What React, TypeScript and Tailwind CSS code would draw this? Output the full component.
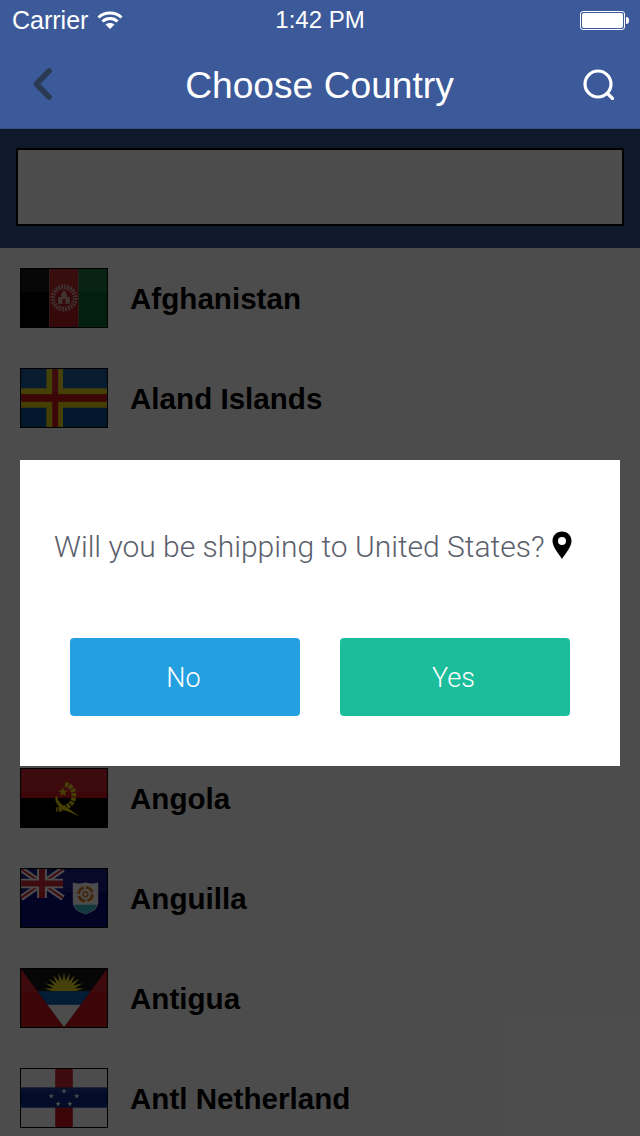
import type { ReactNode } from 'react';

function Star({ x, y, r, fill }: { x: number; y: number; r: number; fill: string }) {
  const pts = [];
  for (let i = 0; i < 10; i++) {
    const a = (Math.PI / 5) * i - Math.PI / 2;
    const d = i % 2 === 0 ? r : r * 0.42;
    pts.push(`${x + d * Math.cos(a)},${y + d * Math.sin(a)}`);
  }
  return <polygon points={pts.join(' ')} fill={fill} />;
}

function Sun() {
  const pts = [];
  const rays = 11;
  for (let i = 0; i <= rays * 2; i++) {
    const a = Math.PI + (Math.PI / (rays * 2)) * i;
    const d = i % 2 === 1 ? 20 : 11;
    pts.push(`${44 + d * 1.05 * Math.cos(a)},${23 + d * Math.sin(a)}`);
  }
  return <polygon points={pts.join(' ')} fill="#e8d20f" />;
}

function Afghanistan() {
  return (
    <>
      <rect width="29" height="60" fill="#000" />
      <rect x="29" width="30" height="60" fill="#b11b1f" />
      <rect x="59" width="29" height="60" fill="#0b6a2e" />
      <circle cx="44" cy="30" r="11.5" fill="none" stroke="#e6dcdc" strokeWidth="5" strokeDasharray="2 1" opacity="0.65" />
      <path d="M38 36 L38 29 L41 29 L41 26 L44 22 L47 26 L47 29 L50 29 L50 36 Z" fill="#efe8e8" opacity="0.7" />
      <rect x="42.5" y="31" width="3" height="5" fill="#b11b1f" />
    </>
  );
}

function Aland() {
  return (
    <>
      <rect width="88" height="60" fill="#0a4d96" />
      <rect x="26" width="17" height="60" fill="#e8d20f" />
      <rect y="20" width="88" height="20" fill="#e8d20f" />
      <rect x="32" width="6" height="60" fill="#c8141e" />
      <rect y="26" width="88" height="8" fill="#c8141e" />
    </>
  );
}

function Angola() {
  return (
    <>
      <rect width="88" height="30" fill="#c8141e" />
      <rect y="30" width="88" height="30" fill="#000" />
      <path d="M45 16 Q 55 18 54 29 Q 53 40 36 42" fill="none" stroke="#e8d20f" strokeWidth="5" strokeDasharray="3.5 1" />
      <path d="M37 28 Q 38 37 49 41 L 60 49 L 48 44 Q 35 40 35 29 Z" fill="#e8d20f" />
      <Star x={43} y={24} r={5} fill="#e8d20f" />
    </>
  );
}

function Anguilla() {
  return (
    <>
      <rect width="88" height="60" fill="#0a0a80" />
      <path d="M0 0 L43 30 M43 0 L0 30" stroke="#fff" strokeWidth="6" />
      <path d="M0 0 L43 30 M43 0 L0 30" stroke="#cc1a2a" strokeWidth="2" />
      <path d="M21.5 0 V30 M0 15 H43" stroke="#fff" strokeWidth="10" />
      <path d="M21.5 0 V30 M0 15 H43" stroke="#cc1a2a" strokeWidth="6" />
      <path d="M53 14 Q 59 16 66 14 Q 73 16 79 14 L 79 35 Q 79 43 66 47 Q 53 43 53 35 Z" fill="#fff" />
      <path d="M54 37 H78 Q 76 43 66 47 Q 56 43 54 37 Z" fill="#3fb8cc" />
      <circle cx="66" cy="26" r="7" fill="none" stroke="#e07a1a" strokeWidth="3" strokeDasharray="9 2" />
      <circle cx="66" cy="26" r="2.5" fill="none" stroke="#e07a1a" strokeWidth="1.5" />
    </>
  );
}

function Antigua() {
  return (
    <>
      <rect width="88" height="60" fill="#c8141e" />
      <polygon points="0,0 88,0 44,60" fill="#000" />
      <Sun />
      <polygon points="17,23 71,23 61,37 27,37" fill="#0a62b8" />
      <polygon points="27,37 61,37 44,60" fill="#fff" />
    </>
  );
}

function AntlNetherland() {
  return (
    <>
      <rect width="88" height="60" fill="#fff" />
      <rect x="35" width="18" height="60" fill="#c8141e" />
      <rect y="19" width="88" height="21" fill="#0a2a8a" />
      <Star x={44} y={23} r={2.8} fill="#fff" />
      <Star x={31} y={28} r={2.8} fill="#fff" />
      <Star x={57} y={28} r={2.8} fill="#fff" />
      <Star x={38} y={36} r={2.8} fill="#fff" />
      <Star x={50} y={36} r={2.8} fill="#fff" />
    </>
  );
}

function Flag({ children }: { children: ReactNode }) {
  return (
    <div className="w-[88px] h-[60px] shrink-0 border border-black overflow-hidden">
      <svg viewBox="0 0 88 60" preserveAspectRatio="none" className="block w-full h-full">
        {children}
        <rect width="88" height="24" fill="#ffffff" opacity="0.08" />
      </svg>
    </div>
  );
}

function Row({ name, flag }: { name: string; flag: ReactNode }) {
  return (
    <li className="flex items-center gap-[22px] h-[100px] pl-5">
      <Flag>{flag}</Flag>
      <span className="pt-[2px] text-[29.6px] font-bold text-black">{name}</span>
    </li>
  );
}

export default function App() {
  return (
    <div className="relative w-[640px] h-[1136px] overflow-hidden bg-white font-['Liberation_Sans',sans-serif]">
      <header className="h-[129px] bg-[#3c5a99] border-b border-[#36507f] text-white">
        <div className="relative flex items-center justify-between h-10 pl-3 pr-[11px]">
          <div className="flex items-center gap-[9px]">
            <span className="text-[25px] leading-none">Carrier</span>
            <svg width="26" height="20" viewBox="0 0 26 20" fill="none" stroke="#fff" strokeWidth="3">
              <path d="M1.5 7.5 C7.5 1.5 18.5 1.5 24.5 7.5" />
              <path d="M5.5 11.5 C9.5 7.5 16.5 7.5 20.5 11.5" />
              <path d="M13 19 L8.5 14.5 C11 12.5 15 12.5 17.5 14.5 Z" fill="#fff" stroke="none" />
            </svg>
          </div>
          <span className="absolute left-0 right-0 text-center text-[24px] leading-none">1:42 PM</span>
          <div className="flex items-center gap-[1px]">
            <div className="w-[45px] h-[19px] rounded-[3px] border border-white p-[1px]">
              <div className="w-full h-full rounded-[2px] bg-white" />
            </div>
            <div className="w-[3px] h-[7px] rounded-r-sm bg-white" />
          </div>
        </div>
        <div className="flex items-center h-[88px] pl-[33px] pr-[26px]">
          <svg width="19" height="32" viewBox="0 0 19 32" fill="none" stroke="#2a3a52" strokeWidth="5.5" strokeLinecap="round" strokeLinejoin="round">
            <path d="M16 3 L3.5 16 L16 29" />
          </svg>
          <h1 className="flex-1 ml-1 pt-[3px] text-center text-[37.2px] leading-none font-normal">Choose Country</h1>
          <svg className="mt-[1px]" width="31" height="31" viewBox="0 0 31 31" fill="none" stroke="#fff" strokeWidth="3.2" strokeLinecap="round">
            <circle cx="15" cy="15" r="13" />
            <path d="M24.5 24.5 L29.5 29.5" />
          </svg>
        </div>
      </header>

      <div className="h-[119px] bg-[#375290] px-4 pt-[19px]">
        <div className="h-[78px] bg-white border-2 border-black" />
      </div>

      <ul>
        <Row name="Afghanistan" flag={<Afghanistan />} />
        <Row name="Aland Islands" flag={<Aland />} />
        {/* next three rows sit fully behind the dialog */}
        <li className="h-[300px]" />
        <Row name="Angola" flag={<Angola />} />
        <Row name="Anguilla" flag={<Anguilla />} />
        <Row name="Antigua" flag={<Antigua />} />
        <Row name="Antl Netherland" flag={<AntlNetherland />} />
      </ul>

      {/* dimmer stops under the nav bar */}
      <div className="absolute inset-x-0 top-[129px] bottom-0 bg-black/70" />

      <div className="absolute left-5 top-[460px] w-[600px] h-[306px] bg-white flex flex-col">
        <div className="flex items-center gap-[7px] mt-[63px] h-[46px] pl-[34px]">
          <span className="text-[30px] font-light text-[#5c606c] font-['Roboto',sans-serif]">Will you be shipping to United States?</span>
          <svg width="20" height="28" viewBox="0 0 20 28" className="-mt-[2px]">
            <path fillRule="evenodd" fill="#000" d="M10 0.5 C4.5 0.5 0.5 4.6 0.5 10 C0.5 16 7 23 10 28 C13 23 19.5 16 19.5 10 C19.5 4.6 15.5 0.5 10 0.5 Z M10 6 A4 4 0 1 1 10 14 A4 4 0 1 1 10 6 Z" />
          </svg>
        </div>
        <div className="flex gap-10 mt-[69px] pl-[50px]">
          <button className="w-[230px] h-[78px] pt-[2px] pr-[3px] rounded-[4px] bg-[#249fdf] text-white text-[27px] font-light font-['Roboto',sans-serif]">No</button>
          <button className="w-[230px] h-[78px] pt-[2px] pr-[3px] rounded-[4px] bg-[#1cbd9b] text-white text-[27px] font-light font-['Roboto',sans-serif]">Yes</button>
        </div>
      </div>
    </div>
  );
}
